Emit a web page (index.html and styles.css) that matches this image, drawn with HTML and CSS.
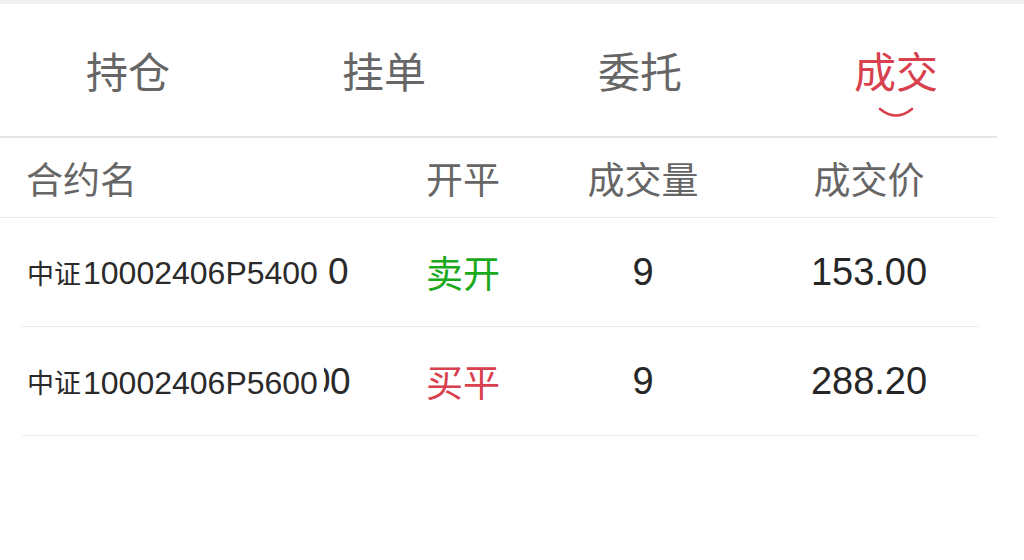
FILE: index.html
```html
<!DOCTYPE html>
<html lang="zh-CN">
<head>
<meta charset="utf-8">
<title>成交</title>
<link rel="stylesheet" href="styles.css">
</head>
<body>
<div class="topstrip"></div>
<div class="page">
  <nav class="tabs">
    <div class="tab">持仓</div>
    <div class="tab">挂单</div>
    <div class="tab">委托</div>
    <div class="tab active">成交
      <svg class="smile" width="36" height="12" viewBox="0 0 36 12"><path d="M2 3 Q18 16 34 3" fill="none" stroke="#d8404e" stroke-width="2.6" stroke-linecap="round"/></svg>
    </div>
  </nav>
  <div class="thead">
    <div class="th name">合约名</div>
    <div class="th">开平</div>
    <div class="th">成交量</div>
    <div class="th">成交价</div>
  </div>
  <div class="rows">
    <div class="row">
      <div class="td name"><span class="cn">中证</span>10002406P5400<span class="tail">0</span></div>
      <div class="td dir open">卖开</div>
      <div class="td num">9</div>
      <div class="td num">153.00</div>
    </div>
    <div class="row">
      <div class="td name"><span class="cn">中证</span>10002406P5600<span class="clip"><span>0</span></span><span class="tail tight">0</span></div>
      <div class="td dir close">买平</div>
      <div class="td num">9</div>
      <div class="td num">288.20</div>
    </div>
  </div>
</div>
</body>
</html>
```

FILE: styles.css
```css
* { box-sizing: border-box; }
html, body {
  margin: 0;
  padding: 0;
  background: #ffffff;
  font-family: "Liberation Sans", "Noto Sans CJK SC", sans-serif;
  color: #222;
}
.topstrip {
  height: 4px;
  background: #f1f1f1;
}
.page {
  width: 997px;
}
.tabs {
  display: grid;
  grid-template-columns: repeat(4, 256px);
  height: 134px;
  border-bottom: 2px solid #e6e6e6;
}
.tab {
  position: relative;
  display: flex;
  align-items: center;
  justify-content: center;
  font-family: "Noto Sans CJK SC", sans-serif;
  font-size: 42px;
  color: #666;
  padding-bottom: 2px;
}
.tab.active {
  color: #d8404e;
}
.smile {
  position: absolute;
  left: 50%;
  top: 102px;
  transform: translateX(-50%);
}
.thead {
  display: grid;
  grid-template-columns: 400px 126px 234px 218px;
  height: 80px;
  align-items: center;
  border-bottom: 1px solid #ececec;
}
.th {
  font-family: "Noto Sans CJK SC", sans-serif;
  font-size: 37px;
  color: #666;
  text-align: center;
}
.th.name {
  text-align: left;
  padding-left: 26px;
}
.rows {
  margin-left: 22px;
  width: 956px;
}
.row {
  display: grid;
  grid-template-columns: 378px 126px 234px 218px;
  height: 109px;
  align-items: center;
  border-bottom: 1px solid #ececec;
}
.td {
  text-align: center;
  font-size: 38px;
  color: #262626;
}
.td.name {
  text-align: left;
  padding-left: 5px;
  font-size: 32px;
  white-space: nowrap;
  color: #2a2a2a;
}
.cn {
  font-family: "Noto Sans CJK SC", sans-serif;
  font-size: 27px;
  margin-right: 2px;
}
.tail {
  font-size: 37px;
  margin-left: 10px;
}
.tail.tight {
  margin-left: 0;
}
.clip {
  display: inline-block;
  width: 6px;
  overflow: hidden;
  vertical-align: bottom;
  margin-left: 6px;
  font-size: 37px;
  line-height: 1.15;
}
.clip span {
  display: inline-block;
  margin-left: -14px;
}
.dir {
  font-family: "Noto Sans CJK SC", sans-serif;
  font-size: 37px;
}
.dir.open { color: #1aa91a; }
.dir.close { color: #d8404e; }
.num {
  font-size: 38px;
}
```
